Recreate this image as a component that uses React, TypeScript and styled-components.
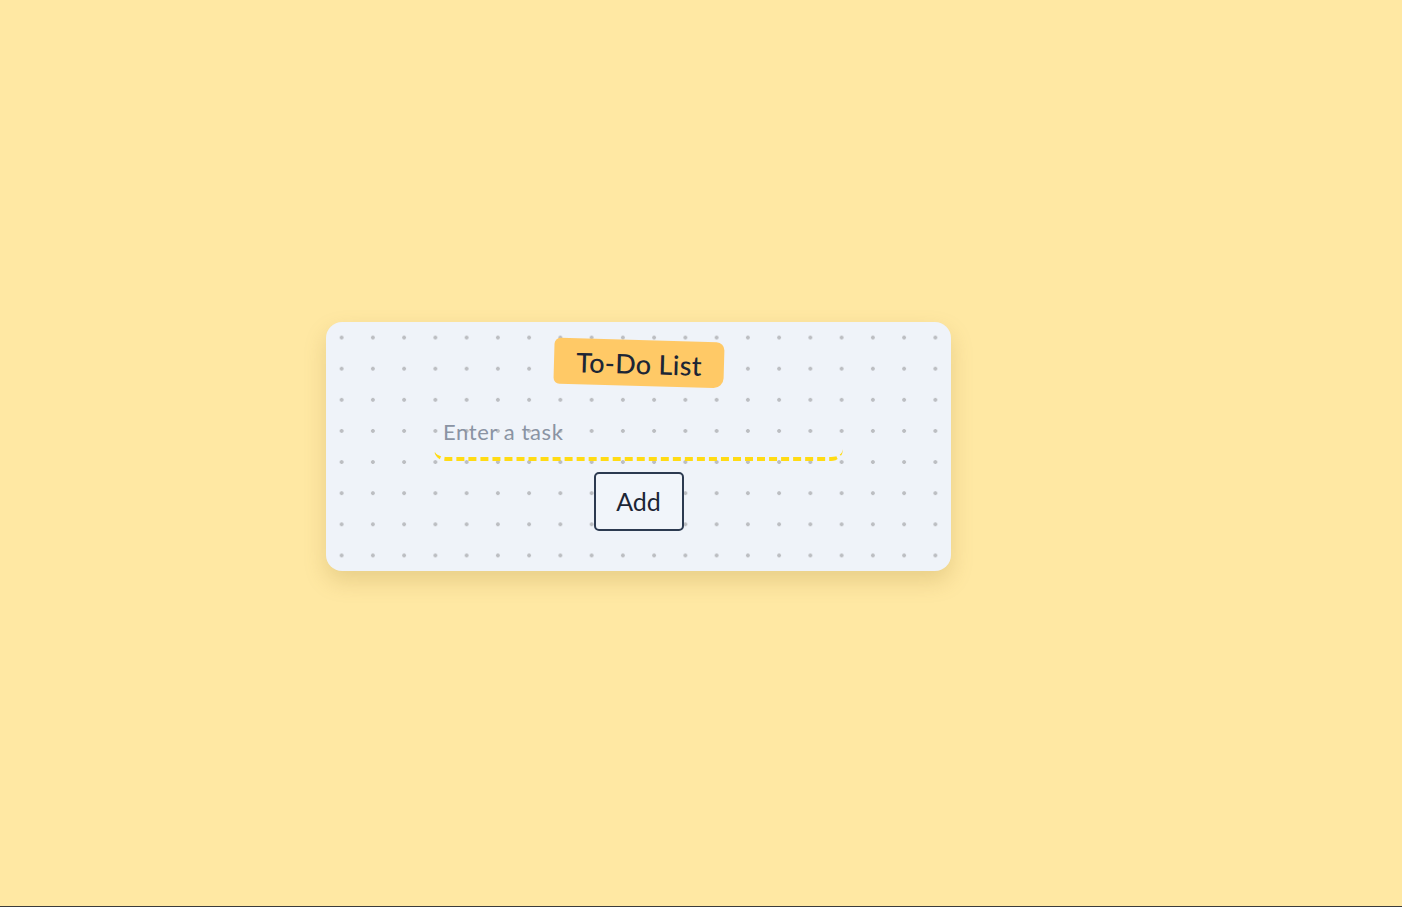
import { useState } from "react";
import styled, { createGlobalStyle } from "styled-components";

const GlobalStyle = createGlobalStyle`
  html, body {
    margin: 0;
    padding: 0;
    background: #ffe8a3;
  }
  body {
    font-family: "Lato", "Noto Sans", sans-serif;
  }
  * {
    box-sizing: border-box;
  }
`;

const Page = styled.div`
  height: 907px;
  border-bottom: 1px solid #3b3b3b;
  display: flex;
  align-items: center;
  justify-content: center;
  padding: 0 125px 14px 0;
`;

const Card = styled.div`
  width: 625px;
  height: 249px;
  border-radius: 16px;
  background-color: #eff3f9;
  background-image: radial-gradient(circle, #bcbec2 1.6px, transparent 2.2px);
  background-size: 31.25px 31.14px;
  box-shadow: 0 10px 22px rgba(150, 120, 40, 0.22);
  display: flex;
  flex-direction: column;
  align-items: center;
  padding-top: 18px;
`;

const Title = styled.h1`
  margin: 0;
  width: 170px;
  height: 46px;
  background: #ffc966;
  border-radius: 6px 8px 10px 6px;
  transform: rotate(1.6deg);
  display: flex;
  align-items: center;
  justify-content: center;
  font-family: "Lato", sans-serif;
  font-weight: 500;
  font-size: 27px;
  color: #1c2535;
  letter-spacing: 0.3px;
`;

const Form = styled.form`
  display: flex;
  flex-direction: column;
  align-items: center;
  margin-top: 26px;
`;

const TaskInput = styled.input`
  width: 409px;
  height: 49px;
  border: none;
  border-bottom: 4px dashed #ffdb14;
  border-radius: 0 0 12px 12px;
  background: transparent;
  outline: none;
  padding: 0 9px 6px;
  font-family: "Lato", sans-serif;
  font-size: 22px;
  letter-spacing: 0.6px;
  color: #1c2535;
  &::placeholder {
    color: #8a93a3;
  }
`;

const AddButton = styled.button`
  margin-top: 11px;
  width: 90px;
  height: 59px;
  border: 2px solid #2c3a50;
  border-radius: 5px;
  background: #f1f5fa;
  font-family: "Lato", sans-serif;
  font-size: 25px;
  color: #1c2535;
  cursor: pointer;
`;

const App = () => {
  const [task, setTask] = useState("");
  return (
    <>
      <GlobalStyle />
      <Page>
        <Card>
          <Title>To-Do List</Title>
          <Form onSubmit={e => e.preventDefault()}>
            <TaskInput
              placeholder="Enter a task"
              value={task}
              onChange={e => setTask(e.target.value)}
            />
            <AddButton type="submit">Add</AddButton>
          </Form>
        </Card>
      </Page>
    </>
  );
};

export default App;
